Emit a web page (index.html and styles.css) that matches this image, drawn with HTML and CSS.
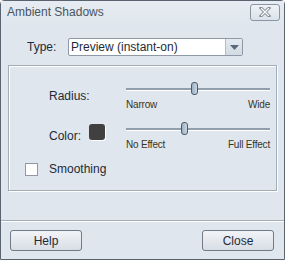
FILE: index.html
```html
<!DOCTYPE html>
<html lang="en">
<head>
    <meta charset="UTF-8">
    <title>Ambient Shadows</title>
    <link rel="stylesheet" href="styles.css">
</head>
<body>
    <div class="window">
        <div class="titlebar">
            <span class="title">Ambient Shadows</span>
            <span class="close-x">
                <svg width="14" height="10" viewBox="0 0 14 10">
                    <path d="M3 1 L11 9 M11 1 L3 9" stroke="#7a8590" stroke-width="3" stroke-linecap="square" fill="none"/>
                    <path d="M3 1 L11 9 M11 1 L3 9" stroke="#ffffff" stroke-width="1.2" fill="none"/>
                </svg>
            </span>
        </div>

        <div class="type-row">
            <span class="label">Type:</span>
            <div class="select">
                <span class="select-text">Preview (instant-on)</span>
                <span class="select-arrow">
                    <svg width="9" height="5" viewBox="0 0 9 5"><path d="M0 0 H9 L4.5 5 Z" fill="#5b6978"/></svg>
                </span>
            </div>
        </div>

        <div class="group">
            <div class="row">
                <span class="row-label">Radius:</span>
                <span class="swatch-gap"></span>
                <div class="slider">
                    <div class="track">
                        <span class="thumb" style="left: 45%"></span>
                    </div>
                    <div class="ticks"><span>Narrow</span><span>Wide</span></div>
                </div>
            </div>
            <div class="row">
                <span class="row-label">Color:</span>
                <span class="swatch"></span>
                <div class="slider">
                    <div class="track">
                        <span class="thumb" style="left: 38%"></span>
                    </div>
                    <div class="ticks"><span>No Effect</span><span>Full Effect</span></div>
                </div>
            </div>
            <div class="check-row">
                <span class="checkbox"></span>
                <span>Smoothing</span>
            </div>
        </div>

        <div class="separator"></div>

        <div class="buttons">
            <div class="btn">Help</div>
            <div class="btn">Close</div>
        </div>
    </div>
</body>
</html>
```

FILE: styles.css
```css
body {
    margin: 0;
    padding: 0;
    font-family: "Liberation Sans", Arial, sans-serif;
    font-size: 12px;
    color: #1e2a38;
}
.window {
    width: 285px;
    height: 260px;
    box-sizing: border-box;
    border: 1px solid #5a6470;
    border-radius: 4px 4px 0 0;
    background-color: #dfe6ed;
    display: flex;
    flex-direction: column;
}
.titlebar {
    height: 25px;
    display: flex;
    align-items: center;
    justify-content: space-between;
    padding: 0 4px 3px 6px;
    box-sizing: border-box;
    background: linear-gradient(#e6ecf2, #dfe6ed);
}
.title {
    font-size: 12px;
    color: #4a5562;
}
.close-x {
    width: 28px;
    height: 15px;
    border: 1px solid #8a96a3;
    border-radius: 3px;
    display: flex;
    align-items: center;
    justify-content: center;
    background: linear-gradient(#eef2f6, #dbe2e9);
}
.type-row {
    display: flex;
    align-items: center;
    padding: 12px 0 0 26px;
}
.label {
    width: 41px;
}
.select {
    width: 175px;
    height: 18px;
    border: 1px solid #8e99a5;
    border-radius: 2px;
    background-color: #ffffff;
    display: flex;
    align-items: center;
    box-sizing: border-box;
}
.select-text {
    flex: 1;
    padding-left: 2px;
}
.select-arrow {
    width: 16px;
    height: 16px;
    border-left: 1px solid #b4bdc7;
    background: linear-gradient(#e4eaf0, #d2dae3);
    display: flex;
    align-items: center;
    justify-content: center;
}
.group {
    margin: 9px 7px 0 7px;
    height: 126px;
    border: 1px solid #a3adb8;
    box-shadow: inset 1px 1px 0 #ffffff, 1px 1px 0 #ffffff;
    box-sizing: border-box;
    padding: 15px 6px 0 16px;
}
.row {
    display: flex;
    align-items: flex-start;
    height: 40px;
}
.row-label {
    width: 40px;
    padding: 8px 0 0 24px;
}
.swatch-gap,
.swatch {
    width: 16px;
    height: 16px;
    margin: 3px 0 0 0;
}
.swatch {
    background-color: #404040;
    border-radius: 3px;
    box-shadow: 1px 1px 0 #ffffff;
}
.slider {
    flex: 1;
    margin-left: 21px;
}
.track {
    position: relative;
    height: 2px;
    margin-top: 7px;
    background-color: #8f9fae;
    border-bottom: 1px solid #ffffff;
}
.thumb {
    position: absolute;
    top: -6px;
    width: 5px;
    height: 11px;
    border: 1px solid #4d5966;
    border-radius: 3px;
    background: linear-gradient(90deg, #9fb1c3, #c9d6e3);
}
.ticks {
    display: flex;
    justify-content: space-between;
    margin-top: 8px;
    font-size: 10px;
    color: #3b3520;
    letter-spacing: -0.2px;
}
.check-row {
    display: flex;
    align-items: center;
    gap: 11px;
    padding-top: 1px;
}
.checkbox {
    width: 11px;
    height: 11px;
    border: 1px solid #8e99a5;
    background-color: #ffffff;
}
.separator {
    margin-top: 29px;
    height: 1px;
    background-color: #a3adb8;
    border-bottom: 1px solid #ffffff;
}
.buttons {
    display: flex;
    justify-content: space-between;
    padding: 8px 10px 0 9px;
}
.btn {
    width: 70px;
    height: 19px;
    border: 1px solid #707b87;
    border-radius: 3px;
    background: linear-gradient(#f2f4f7, #d8dee5);
    display: flex;
    align-items: center;
    justify-content: center;
    box-sizing: content-box;
}
```
